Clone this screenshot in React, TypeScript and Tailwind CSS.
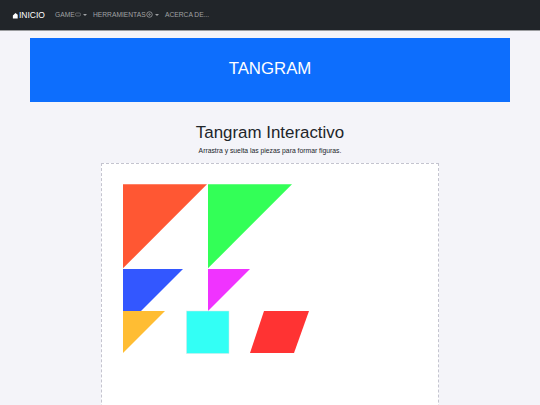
import React from 'react';

const Caret = () => (
  <span className="ml-[2px] inline-block w-0 h-0 border-x-[2px] border-x-transparent border-t-[2px] border-t-[#a0a2a4]" />
);

const Tangram = () => (
  <svg width="336" height="241" viewBox="0 0 336 241" className="block">
    <polygon points="21,20.3 105,20.3 21,104.3" fill="#ff5733" />
    <polygon points="106,20.3 190,20.3 106,104.3" fill="#33ff57" />
    <polygon points="21,105 81,105 21,165" fill="#3357ff" />
    <polygon points="106,105 148,105 106,147" fill="#f033ff" />
    <polygon points="21,147 63,147 21,189" fill="#ffbd33" />
    <rect x="84.5" y="147" width="42.5" height="42.5" fill="#33fff5" stroke="#d5e8e8" strokeWidth="0.5" />
    <polygon points="162,147 207,147 192,189 148,189" fill="#ff3333" />
  </svg>
);

export default function App() {
  return (
    <div className="h-[405px] w-[540px] overflow-hidden bg-[#f4f4f9] font-['Liberation_Sans',Arial,sans-serif]">
      <nav className="h-[31px] bg-[#212529] flex items-center pl-[12px] border-b border-b-[#9a9c9e]">
        <a className="flex items-center text-white text-[8.5px] mr-[10px]">
          <svg width="7" height="7" viewBox="0 0 16 16" fill="#fff">
            <path d="M8 2 L13 6 V15 H2 V8 Z" />
          </svg>
          INICIO
        </a>
        <div className="flex items-center text-[#a0a2a4] text-[6.7px]">
          <span className="flex items-center w-[38px]">
            GAME
            <svg width="6" height="5" viewBox="0 0 14 10" fill="none" stroke="#a0a2a4" strokeWidth="1.2">
              <rect x="1" y="1.5" width="12" height="7" rx="3" />
            </svg>
            <Caret />
          </span>
          <span className="flex items-center w-[72px]">
            HERRAMIENTAS
            <svg width="7" height="7" viewBox="0 0 14 14" fill="none" stroke="#a0a2a4" strokeWidth="1.6">
              <circle cx="7" cy="7" r="5.5" />
              <circle cx="7" cy="7" r="1.5" />
            </svg>
            <Caret />
          </span>
          <span>ACERCA DE...</span>
        </div>
      </nav>
      <main className="px-[30px] pt-[7px] flex flex-col items-center">
        <header className="w-[480px] h-[64px] bg-[#0d6efd] flex items-center justify-center pb-[2px] text-white text-[16.8px]">
          TANGRAM
        </header>
        <h1 className="mt-[20px] text-[#212529] text-[16.9px] leading-[22px]">Tangram Interactivo</h1>
        <p className="mt-[2px] text-[#212529] text-[6.8px] leading-[10px]">Arrastra y suelta las piezas para formar figuras.</p>
        <section className="mt-[7px] w-[338px] h-[300px] bg-white border border-dashed border-[#c4c4cf]">
          <Tangram />
        </section>
      </main>
    </div>
  );
}
